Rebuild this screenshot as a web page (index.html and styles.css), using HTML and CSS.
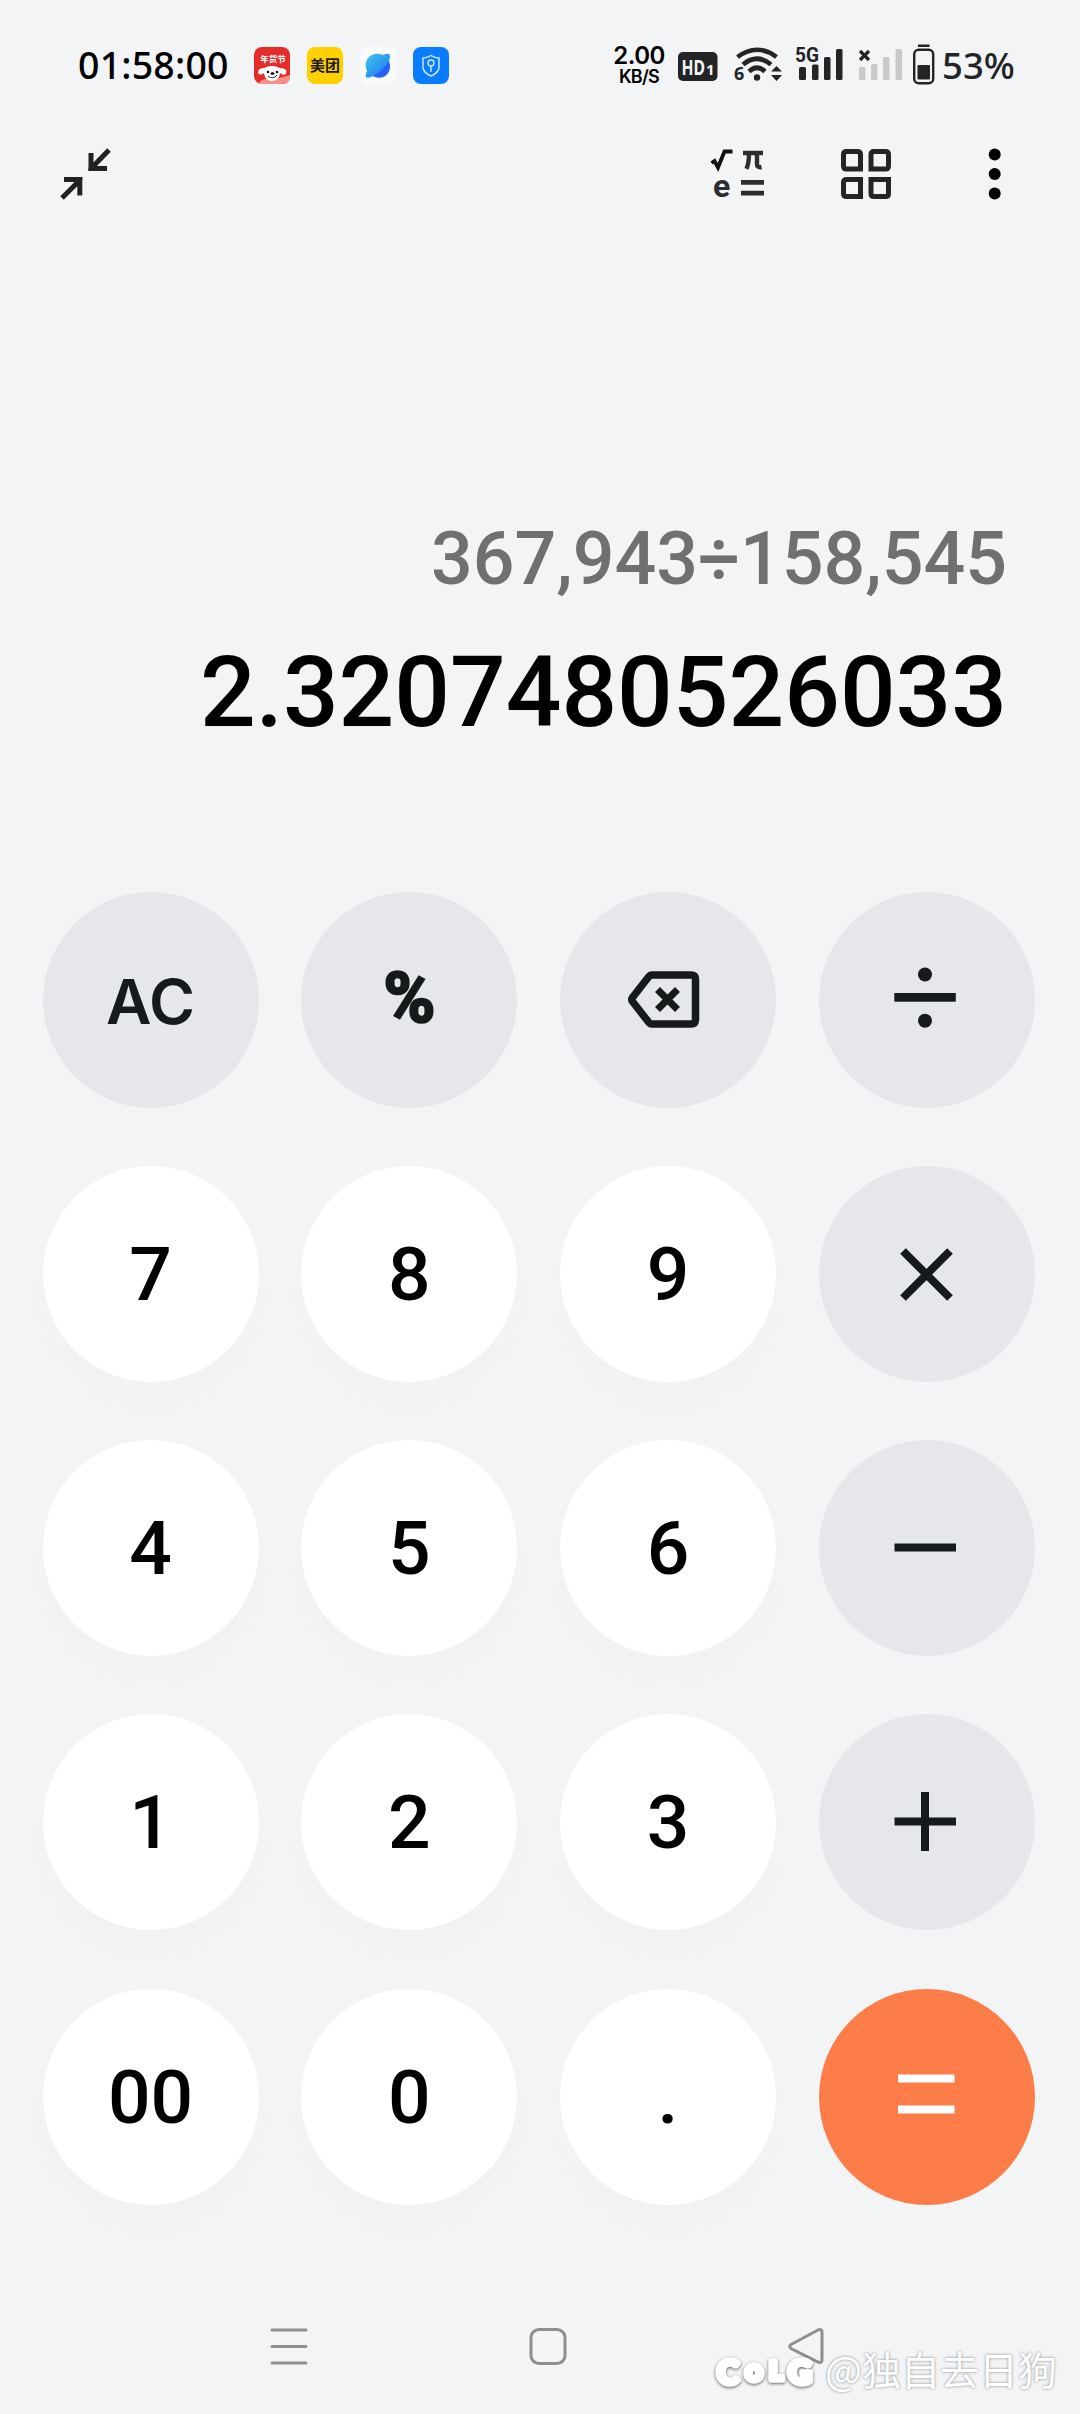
FILE: index.html
```html
<!DOCTYPE html>
<html lang="zh-CN">
<head>
  <meta charset="UTF-8">
  <title>计算器</title>
  <link rel="stylesheet" href="styles.css">
</head>
<body>
  <div class="phone">
    <header class="status-bar">
      <span class="time">01:58:00</span>
      <div class="apps">
        <svg class="app" viewBox="0 0 36 37">
          <rect width="36" height="37" rx="8" fill="#e42d2b"/>
          <path d="M4 37Q8 30 18 33L36 28V30Q36 37 28 37Z" fill="#f58f88"/>
          <text class="app-jd" x="19" y="15">年货节</text>
          <path d="M10 21Q18 17 26 21Q34 21 32 27Q29 29 26 26Q25 34 18 34Q11 34 10 26Q6 29 4 26Q4 21 10 21Z" fill="#fff"/>
          <circle cx="14" cy="25" r="1.2"/><circle cx="23" cy="25" r="1.2"/>
          <ellipse cx="18.5" cy="26.5" rx="2" ry="1.3"/>
          <path d="M14 29Q19 33 23 28" fill="none" stroke="#222"/>
        </svg>
        <svg class="app" viewBox="0 0 36 37">
          <rect width="36" height="37" rx="8" fill="#ffd000"/>
          <text class="app-mt" x="18" y="24">美团</text>
        </svg>
        <svg class="app" viewBox="0 0 36 37">
          <defs>
            <linearGradient id="planet" x1="0" y1="0" x2="1" y2="1">
              <stop offset="0" stop-color="#45c5ee"/>
              <stop offset=".6" stop-color="#2795ef"/>
              <stop offset="1" stop-color="#2455f0"/>
            </linearGradient>
          </defs>
          <rect width="36" height="37" rx="8" fill="#f8fafc"/>
          <path d="M23 8Q28 6 29.500 7.500Q30.500 9 29 14Q32 24 25 29Q19 32 13 29Q8 32 6 30Q5 28 7 24Q3 15 10 9Q16 5 23 8Z" fill="url(#planet)"/>
          <path d="M29 14Q32 24 25 29Q19 32 13 29Q23 24 29 14Z" fill="#2860f5"/>
        </svg>
        <svg class="app" viewBox="0 0 36 37">
          <rect width="36" height="37" rx="8" fill="#0a7cff"/>
          <g fill="none" stroke="#d4eaff" stroke-width="1.400">
            <path d="M18 8.500Q22 11 26 11V21Q25 26 18 29Q11 26 10 21V11Q14 11 18 8.500Z"/>
            <circle cx="18" cy="16" r="3"/>
            <path d="M18 19V25"/>
          </g>
        </svg>
      </div>

      <div class="network-speed">
        <span class="speed">2.00</span>
        <span class="unit">KB/S</span>
      </div>

      <svg class="indicators" viewBox="670 30 270 70">
        <g fill="#222426">
          <rect x="678" y="52" width="39.500" height="29" rx="5"/>
          <text class="hd" x="681.500" y="74.500" textLength="23.500" lengthAdjust="spacingAndGlyphs">HD</text>
          <text class="hd-sim" x="706" y="74.500">1</text>

          <g fill="none" stroke="#222426" stroke-width="4.600">
            <path d="M737.500 57Q757 42.500 776.500 57"/>
            <path d="M743 64.500Q757 53 771 64.500"/>
            <path d="M749 71.500Q757 64 765 71.500"/>
          </g>
          <circle cx="757" cy="77.500" r="3.200"/>
          <text class="wifi-gen" x="734" y="80">6</text>
          <path d="M771 71.500L776.500 66L782 71.500ZM771 75L776.500 81L782 75Z"/>

          <text class="net" x="795" y="62" textLength="24" lengthAdjust="spacingAndGlyphs">5G</text>
          <rect x="799" y="67" width="7" height="13" rx="1.500"/>
          <rect x="812" y="64.500" width="6.500" height="15.500" rx="1.500"/>
          <rect x="824" y="57" width="6.500" height="23" rx="1.500"/>
          <rect x="836" y="49" width="6.500" height="31" rx="1.500"/>
        </g>

        <path d="M860 51L869 60M869 51L860 60" stroke="#222426" stroke-width="3.200"/>
        <g fill="#c8c9cb">
          <rect x="859" y="67" width="6.500" height="13" rx="1.500"/>
          <rect x="871" y="64" width="6.500" height="16" rx="1.500"/>
          <rect x="883" y="57" width="6.500" height="23" rx="1.500"/>
          <rect x="895.500" y="49" width="6.500" height="31" rx="1.500"/>
        </g>

        <rect x="918" y="44.500" width="11.500" height="2.500" fill="#222426"/>
        <rect x="914.200" y="49.700" width="19" height="33.500" rx="4.500" fill="none" stroke="#222426" stroke-width="2.400"/>
        <rect x="917.500" y="65" width="12.500" height="14.500" rx="1" fill="#222426"/>
      </svg>
      <span class="percent">53%</span>
    </header>

    <nav class="toolbar">
      <svg class="shrink" viewBox="60 148 52 53" fill="none" stroke="#202224" stroke-width="5">
        <path d="M109 150L92 167.500M91 153V168.500H107"/>
        <path d="M62 198L79.500 180.500M64 179.500H79.800V195.500"/>
        <path d="M88.500 167.500V171H92ZM79 177H82.300V180Z" fill="#202224" stroke="none"/>
      </svg>
      <div class="tools">
        <svg class="science" viewBox="710 146 55 64">
          <path d="M711.500 163L714.500 161L718 167.500L724.500 151.500H732.500" fill="none" stroke="#101112" stroke-width="3.800"/>
          <g fill="none" stroke="#2b2d2f" stroke-width="4.400">
            <path d="M743 153H763M749 153Q749 163 746.500 168.800M757 153V164Q757 168 761.500 167"/>
          </g>
          <text class="euler" x="713" y="196.500">e</text>
          <path d="M741 182.300H764M741 193.200H764" stroke="#2b2d2f" stroke-width="4.800"/>
        </svg>
        <svg class="grid-icon" viewBox="840 147 52 52" fill="none" stroke="#222426" stroke-width="5">
          <path d="M846.500 150.500H857.500Q860.500 150.500 860.500 153.500V168H846.500Q843.500 168 843.500 165V153.500Q843.500 150.500 846.500 150.500Z"/>
          <path d="M871 168V153.500Q871 150.500 874 150.500H885.500Q888.500 150.500 888.500 153.500V165Q888.500 168 885.500 168Z"/>
          <path d="M860.500 178.500V195.500H846.500Q843.500 195.500 843.500 192.500V181.500Q843.500 178.500 846.500 178.500Z"/>
          <path d="M871 178.500H888.500V192.500Q888.500 195.500 885.500 195.500H874Q871 195.500 871 192.500Z"/>
        </svg>
        <svg class="more" viewBox="988 148 14 52">
          <circle cx="994.700" cy="154.500" r="6"/>
          <circle cx="994.700" cy="174" r="6"/>
          <circle cx="994.700" cy="193.500" r="6"/>
        </svg>
      </div>
    </nav>

    <section class="display">
      <div class="expression">367,943÷158,545</div>
      <div class="result">2.3207480526033</div>
    </section>

    <main class="keypad">
      <button class="key func ac">AC</button>
      <button class="key func pct">%</button>
      <button class="key func">
        <svg class="key-icon" viewBox="-40 -40 80 80" fill="none" stroke="#171a1a" stroke-width="7.500">
          <path d="M-16 -25H23Q27.500 -25 27.500 -20.500V19.500Q27.500 24 23 24H-16Q-18 24 -19.500 22L-35.500 1.500Q-37 -.500 -35.500 -2.500L-19.500 -23Q-18 -25 -16 -25Z"/>
          <path d="M-10.500 -10.500L9.500 9.500M9.500 -10.500L-10.500 9.500" stroke-width="7"/>
        </svg>
      </button>
      <button class="key func">
        <svg class="key-icon" viewBox="-40 -40 80 80" fill="#171a1a">
          <circle cx="-2" cy="-25.500" r="7"/>
          <rect x="-32.700" y="-7" width="61.500" height="8.700"/>
          <circle cx="-2" cy="20.700" r="7"/>
        </svg>
      </button>

      <button class="key">7</button>
      <button class="key">8</button>
      <button class="key">9</button>
      <button class="key func">
        <svg class="key-icon" viewBox="-40 -40 80 80">
          <path d="M-24 -23L23 24M23 -23L-24 24" stroke="#171a1a" stroke-width="8"/>
        </svg>
      </button>

      <button class="key">4</button>
      <button class="key">5</button>
      <button class="key">6</button>
      <button class="key func">
        <svg class="key-icon" viewBox="-40 -40 80 80">
          <path d="M-32.500 -.500H29" stroke="#171a1a" stroke-width="8"/>
        </svg>
      </button>

      <button class="key">1</button>
      <button class="key">2</button>
      <button class="key">3</button>
      <button class="key func">
        <svg class="key-icon" viewBox="-40 -40 80 80">
          <path d="M-32.500 -.500H29M-2 -30V29" stroke="#171a1a" stroke-width="8"/>
        </svg>
      </button>

      <button class="key">00</button>
      <button class="key">0</button>
      <button class="key">.</button>
      <button class="key equals">
        <svg class="key-icon" viewBox="-40 -40 80 80">
          <path d="M-29 -18.500H27.500M-29 12.500H27.500" stroke="#fff" stroke-width="8"/>
        </svg>
      </button>
    </main>

    <footer class="nav-bar">
      <svg class="nav-icon" viewBox="0 0 40 40">
        <path d="M3 4H37M3 20.500H37M3 37H37" stroke-linecap="round"/>
      </svg>
      <svg class="nav-icon" viewBox="0 0 40 40">
        <rect x="3" y="3.500" width="34" height="34" rx="8"/>
      </svg>
      <svg class="nav-icon" viewBox="0 0 40 40">
        <path d="M4 18.500L31 4Q35 2.500 35 6V34Q35 37.500 31 36L4 22.500Q1.500 20.500 4 18.500Z"/>
      </svg>
    </footer>

    <div class="watermark">
      <svg class="brand" viewBox="0 0 110 46">
        <text y="34"><tspan x="5" font-size="33">C</tspan><tspan x="33" y="31" font-size="31">o</tspan><tspan x="57" y="30" font-size="27">L</tspan><tspan x="76" y="34" font-size="33">G</tspan></text>
      </svg>
      <span class="author">@独自去日狗</span>
    </div>
  </div>
</body>
</html>
```
FILE: styles.css
```css
* {
  box-sizing: border-box;
}
body {
  margin: 0;
  background: #f2f4f6;
  font-family: Roboto, "Noto Sans CJK SC", sans-serif;
  color: #000;
}
svg {
  display: block;
  flex: none;
}
.phone {
  position: relative;
  width: 1080px;
  height: 2414px;
  overflow: hidden;
}

/* status bar */
.status-bar {
  display: flex;
  align-items: center;
  height: 130px;
  padding-left: 78px;
}
.time {
  width: 176px;
  font: 500 37.5px/50px "Noto Sans", sans-serif;
  letter-spacing: 0.2px;
}
.apps {
  display: flex;
  gap: 17px;
}
.app {
  width: 36px;
  height: 37px;
}
.app-jd {
  font: 700 8.5px "Noto Sans CJK SC", sans-serif;
  fill: #fff;
  text-anchor: middle;
}
.app-mt {
  font: 700 15px "Noto Sans CJK SC", sans-serif;
  fill: #1d1a08;
  text-anchor: middle;
}
.network-speed {
  display: flex;
  flex-direction: column;
  align-items: center;
  width: 56px;
  margin-left: 162px;
  padding-top: 2px;
}
.speed {
  font: 600 24px/22px Inter, sans-serif;
  letter-spacing: -0.5px;
}
.unit {
  font: 600 18px/20px Inter, sans-serif;
  letter-spacing: -0.7px;
}
.indicators {
  width: 270px;
  height: 70px;
  margin-left: 3px;
}
.hd {
  font: 700 22px "Noto Sans", sans-serif;
  fill: #f2f4f6;
}
.hd-sim {
  font: 700 15px "Noto Sans", sans-serif;
  fill: #f2f4f6;
}
.wifi-gen {
  font: 700 18px "Noto Sans", sans-serif;
}
.net {
  font: 700 21px Roboto, sans-serif;
}
.percent {
  margin-left: 2px;
  font: 500 36.5px/50px "Noto Sans", sans-serif;
  color: #222426;
}

/* toolbar */
.toolbar {
  display: flex;
  justify-content: space-between;
  align-items: center;
  height: 88px;
  padding: 0 78px 0 60px;
}
.shrink {
  width: 52px;
  height: 53px;
}
.tools {
  display: flex;
  align-items: center;
}
.science {
  width: 55px;
  height: 64px;
  margin-top: 8px;
}
.euler {
  font: 700 32px Roboto, sans-serif;
  fill: #2b2d2f;
}
.grid-icon {
  width: 52px;
  height: 52px;
  margin-left: 75px;
}
.more {
  width: 14px;
  height: 52px;
  margin-left: 96px;
}

/* display */
.display {
  height: 673.5px;
  padding: 289px 73px 0 0;
  text-align: right;
  font-weight: 500;
}
.expression {
  height: 104px;
  font-size: 73.5px;
  line-height: 104px;
  color: #6f7072;
}
.result {
  font-size: 98px;
  line-height: 164px;
}

/* keypad */
.keypad {
  display: grid;
  grid-template-columns: repeat(4, 216px);
  grid-auto-rows: 216px;
  gap: 58.3px 42.7px;
  padding-left: 42.6px;
}
.key {
  display: flex;
  justify-content: center;
  align-items: center;
  padding: 0;
  border: none;
  border-radius: 50%;
  background: #fff;
  box-shadow: 0 24px 40px rgba(0, 0, 0, 0.01);
  color: #000;
  font: 500 75px Roboto, sans-serif;
}
.func {
  background: #e5e7ea;
  box-shadow: none;
  color: #171a1a;
}
.ac {
  padding-top: 3px;
  font: 600 62.5px Inter, sans-serif;
}
.pct {
  padding-bottom: 3px;
  font: 700 70px Roboto, sans-serif;
  -webkit-text-stroke: 2.5px #171a1a;
}
.equals {
  background: #fc7d48;
  box-shadow: none;
}
.key-icon {
  width: 80px;
  height: 80px;
}

/* system navigation */
.nav-bar {
  display: flex;
  gap: 219px;
  padding: 121px 0 0 269px;
}
.nav-icon {
  width: 40px;
  height: 40px;
  fill: none;
  stroke: #8d8e90;
  stroke-width: 3;
}

/* author mark lies over the navigation bar */
.watermark {
  position: absolute;
  left: 712px;
  top: 2350px;
  display: flex;
  align-items: center;
  height: 46px;
}
.brand {
  width: 110px;
  height: 46px;
  font-family: Lato, sans-serif;
  font-weight: 900;
  fill: #fff;
  stroke: #fff;
  stroke-width: 5.5;
  stroke-linejoin: round;
  filter: drop-shadow(0 1px 1.5px rgba(0, 0, 0, 0.6));
}
.author {
  margin: -11px 0 0 3px;
  font: 400 39px/46px "Noto Sans CJK SC", sans-serif;
  color: #fff;
  text-shadow: 0 0 3px rgba(0, 0, 0, 0.45);
  white-space: nowrap;
}
```
